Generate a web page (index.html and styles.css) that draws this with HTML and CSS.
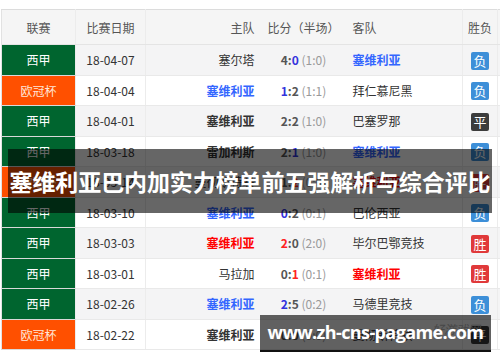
FILE: index.html
```html
<!DOCTYPE html>
<html lang="zh">
<head>
<meta charset="utf-8">
<link rel="stylesheet" href="styles.css">
</head>
<body>
<div class="page">
  <table class="matches">
    <colgroup>
      <col class="c-league"><col class="c-date"><col class="c-home"><col class="c-score"><col class="c-away"><col class="c-res"><col class="c-extra">
    </colgroup>
    <thead>
      <tr>
        <th>联赛</th><th>比赛日期</th><th class="home">主队</th><th>比分（半场）</th><th class="away">客队</th><th>胜负</th><th></th>
      </tr>
    </thead>
    <tbody>
      <tr class="odd">
        <td class="lg laliga">西甲</td><td>18-04-07</td><td class="home">塞尔塔</td>
        <td class="score"><b>4:<i class="b">0</i></b> <span class="ht">(1:0)</span></td>
        <td class="away"><strong class="blue">塞维利亚</strong></td><td><span class="badge lose">负</span></td><td></td>
      </tr>
      <tr>
        <td class="lg ucl">欧冠杯</td><td>18-04-04</td><td class="home"><strong class="blue">塞维利亚</strong></td>
        <td class="score"><b><i class="b">1</i>:2</b> <span class="ht">(1:1)</span></td>
        <td class="away">拜仁慕尼黑</td><td><span class="badge lose">负</span></td><td></td>
      </tr>
      <tr class="odd">
        <td class="lg laliga">西甲</td><td>18-04-01</td><td class="home"><strong>塞维利亚</strong></td>
        <td class="score"><b>2:2</b> <span class="ht">(1:0)</span></td>
        <td class="away">巴塞罗那</td><td><span class="badge draw">平</span></td><td></td>
      </tr>
      <tr>
        <td class="lg laliga">西甲</td><td>18-03-18</td><td class="home"><strong>雷加利斯</strong></td>
        <td class="score"><b>2:<i class="b">1</i></b> <span class="ht">(1:0)</span></td>
        <td class="away"><strong class="blue">塞维利亚</strong></td><td><span class="badge lose">负</span></td><td></td>
      </tr>
      <tr class="odd">
        <td class="lg ucl">欧冠杯</td><td>18-03-14</td><td class="home">曼彻斯特联</td>
        <td class="score"><b>1:<i class="r">2</i></b> <span class="ht">(0:0)</span></td>
        <td class="away"><strong class="red">塞维利亚</strong></td><td><span class="badge win">胜</span></td><td></td>
      </tr>
      <tr>
        <td class="lg laliga">西甲</td><td>18-03-10</td><td class="home"><strong class="blue">塞维利亚</strong></td>
        <td class="score"><b><i class="b">0</i>:2</b> <span class="ht">(0:1)</span></td>
        <td class="away">巴伦西亚</td><td><span class="badge lose">负</span></td><td></td>
      </tr>
      <tr class="odd">
        <td class="lg laliga">西甲</td><td>18-03-03</td><td class="home"><strong class="red">塞维利亚</strong></td>
        <td class="score"><b><i class="r">2</i>:0</b> <span class="ht">(2:0)</span></td>
        <td class="away">毕尔巴鄂竞技</td><td><span class="badge win">胜</span></td><td></td>
      </tr>
      <tr>
        <td class="lg laliga">西甲</td><td>18-03-01</td><td class="home">马拉加</td>
        <td class="score"><b>0:<i class="r">1</i></b> <span class="ht">(0:1)</span></td>
        <td class="away"><strong class="red">塞维利亚</strong></td><td><span class="badge win">胜</span></td><td></td>
      </tr>
      <tr class="odd">
        <td class="lg laliga">西甲</td><td>18-02-26</td><td class="home"><strong class="blue">塞维利亚</strong></td>
        <td class="score"><b><i class="b">2</i>:5</b> <span class="ht">(0:2)</span></td>
        <td class="away">马德里竞技</td><td><span class="badge lose">负</span></td><td></td>
      </tr>
      <tr>
        <td class="lg ucl">欧冠杯</td><td>18-02-22</td><td class="home"><strong>塞维利亚</strong></td>
        <td class="score"><b>0:0</b> <span class="ht">(0:0)</span></td>
        <td class="away">曼彻斯特联</td><td><span class="badge draw">平</span></td><td></td>
      </tr>
    </tbody>
  </table>

  <div class="banner">塞维利亚巴内加实力榜单前五强解析与综合评比</div>
  <div class="mark-faint">好游戏网</div>
  <div class="watermark">www.zh-cns-pagame.com</div>
</div>
</body>
</html>
```

FILE: styles.css
```css
html, body {
  margin: 0;
  padding: 0;
  background: #ffffff;
  overflow: hidden;
}

.page {
  position: relative;
  width: 500px;
  height: 362px;
  overflow: hidden;
  padding: 9px 0 0 1px;
  box-sizing: border-box;
  font-family: "Noto Sans CJK SC", "Noto Sans", sans-serif;
  font-size: 12px;
  color: #333333;
}

.matches {
  border-collapse: collapse;
  table-layout: fixed;
  width: 560px;
  border-top: 1px solid #dcdcdc;
  border-left: 1px solid #e2e2e2;
  border-bottom: 1px solid #d0d0d0;
}

.c-league { width: 74px; }
.c-date { width: 70px; }
.c-home { width: 117px; }
.c-score { width: 82px; }
.c-away { width: 118px; }
.c-res { width: 35px; }
.c-extra { width: 64px; }

.matches th {
  height: 34px;
  padding: 0;
  font-weight: normal;
  color: #555555;
  background: #f5f5f5;
  text-align: center;
  border-bottom: 1px solid #e4e4e4;
}

.matches td {
  height: 29.5px;
  padding: 0;
  text-align: center;
  white-space: nowrap;
  border-bottom: 1px solid #e9e9e9;
  background: #ffffff;
}

.matches tr.odd td {
  background: #f4f4f5;
}

.matches th:nth-child(1), .matches td:nth-child(1),
.matches th:nth-child(2), .matches td:nth-child(2),
.matches th:nth-child(5), .matches td:nth-child(5),
.matches th:nth-child(6), .matches td:nth-child(6) {
  border-right: 1px solid #ececec;
}

.matches .home {
  text-align: right;
  padding-right: 8px;
}

.matches .away {
  text-align: left;
  padding-left: 8px;
}

.matches td.lg {
  color: #ffffff;
  border-bottom-color: #d9d9d9;
}

.matches tr td.laliga { background: #00652f; }
.matches tr td.ucl { background: #ff5000; color: #ffe6d8; }

strong {
  font-weight: bold;
  color: #333333;
}

strong.blue { color: #3366ff; }
strong.red { color: #ff0000; }

.score b {
  font-weight: bold;
  color: #555555;
}

.score i {
  font-style: normal;
}

.score i.b { color: #3333dd; }
.score i.r { color: #ff2222; }

.ht {
  color: #999999;
}

.badge {
  display: inline-block;
  width: 18px;
  height: 18px;
  line-height: 18px;
  border-radius: 2px;
  color: #ffffff;
  font-size: 13px;
  vertical-align: middle;
}

.badge.lose { background: #3d8fd8; }
.badge.win { background: #e0393a; }
.badge.draw { background: #3c3c3c; }

.banner {
  position: absolute;
  left: 8px;
  top: 149px;
  width: 484px;
  height: 64px;
  line-height: 64px;
  background: rgba(0, 0, 0, 0.6);
  color: #ffffff;
  font-size: 23px;
  font-weight: bold;
  text-align: center;
  white-space: nowrap;
  letter-spacing: -0.1px;
}

.mark-faint {
  position: absolute;
  left: 432px;
  top: 320px;
  font-size: 12px;
  font-style: italic;
  color: #bbbbbb;
}

.watermark {
  position: absolute;
  left: 260px;
  top: 315px;
  width: 231px;
  height: 35px;
  line-height: 35px;
  background: rgba(0, 0, 0, 0.62);
  border-bottom: 2px solid #111111;
  color: #ffffff;
  font-family: "Open Sans", "Noto Sans", sans-serif;
  font-size: 18px;
  font-weight: bold;
  letter-spacing: -0.6px;
  text-align: center;
  white-space: nowrap;
}
```
